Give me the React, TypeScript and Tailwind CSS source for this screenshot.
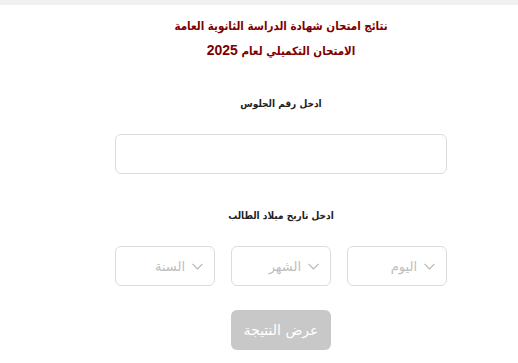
import React from "react";

function Chevron() {
  return (
    <svg width="11" height="7" viewBox="0 0 11 7" fill="none" className="shrink-0">
      <path d="M0.5 0.8 L5.5 6 L10.5 0.8" stroke="#b5b5b5" strokeWidth="1.1" />
    </svg>
  );
}

function SelectBox({ label }: { label: string }) {
  return (
    <div className="w-[100px] h-[40px] rounded-[6px] border border-[#dcdcdc] bg-white flex flex-row items-center gap-[7px] pr-[11px]">
      <Chevron />
      <span className="text-[13px] text-[#bdbdbd] leading-none">{label}</span>
    </div>
  );
}

const cond = { fontFamily: '"DejaVu Sans Condensed", "DejaVu Sans", sans-serif' };

export default function App() {
  return (
    <div
      className="w-[518px] h-[363px] bg-white overflow-hidden"
      style={{ fontFamily: '"DejaVu Sans", "Noto Sans", sans-serif' }}
    >
      <div className="h-[5px] bg-[#f1f1f1]" />
      <div className="pl-[44px] flex flex-col items-center">
        <div className="mt-[9px] text-center font-bold text-[#800000] text-[11.5px] leading-[24px]" dir="rtl" style={cond}>
          <div>نتائج امتحان شهادة الدراسة الثانوية العامة</div>
          <div>
            الامتحان التكميلي لعام <span className="text-[14px]" style={{ fontFamily: '"Liberation Sans", sans-serif' }}>2025</span>
          </div>
        </div>
        <div className="mt-[31px] h-[20px] leading-[20px] font-bold text-[10px] text-[#222]" dir="rtl" style={cond}>
          ادخل رقم الجلوس
        </div>
        <div className="mt-[20px] w-[332px] h-[40px] rounded-[6px] border border-[#dcdcdc] bg-white" />
        <div className="mt-[32px] h-[20px] leading-[20px] font-bold text-[10px] text-[#222]" dir="rtl" style={cond}>
          ادخل تاريخ ميلاد الطالب
        </div>
        <div className="mt-[20px] flex flex-row gap-[16px]" dir="rtl">
          <SelectBox label="اليوم" />
          <SelectBox label="الشهر" />
          <SelectBox label="السنة" />
        </div>
        <div
          className="mt-[24px] w-[100px] h-[40px] rounded-[6px] bg-[#c8c8c8] flex items-center justify-center text-white text-[14px]"
          dir="rtl"
        >
          عرض النتيجة
        </div>
      </div>
    </div>
  );
}
